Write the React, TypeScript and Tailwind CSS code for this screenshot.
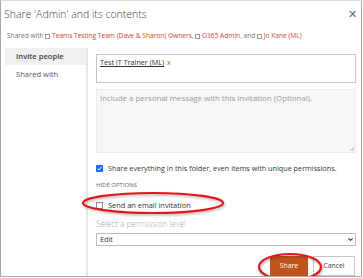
import { ChevronDown } from 'lucide-react';

const font = { fontFamily: '"Open Sans", "Noto Sans", sans-serif' };

export default function App() {
  return (
    <div className="w-[363px] h-[278px] bg-white" style={font}>
      <div className="relative w-[362px] h-[277px] border border-[#a9a9a9] border-t-[#dcdcdc] bg-white overflow-hidden">
        {/* Header */}
        <div className="flex items-start justify-between pl-[3px] pr-[4px] pt-[5px] h-[21px]">
          <h1 className="text-[10.5px] font-light text-[#444] leading-[16px]">
            Share 'Admin' and its contents
          </h1>
          <span className="text-[11px] leading-[10px] text-[#666] mt-[3px]">✕</span>
        </div>

        <p className="mt-[9px] pl-[6px] text-[6.6px] leading-[9px] text-[#777] whitespace-nowrap">
          Shared with <span className="inline-block w-[5px] h-[5px] border border-[#999] align-[-0.5px]" />{' '}
          <span className="text-[#c8472a]">Teams Testing Team (Dave &amp; Sharon) Owners</span>,{' '}
          <span className="inline-block w-[5px] h-[5px] border border-[#999] align-[-0.5px]" />{' '}
          <span className="text-[#c8472a]">O365 Admin</span>, and{' '}
          <span className="inline-block w-[5px] h-[5px] border border-[#999] align-[-0.5px]" />{' '}
          <span className="text-[#c8472a]">Jo Kane (ML)</span>
        </p>

        {/* Body */}
        <div className="flex mt-[8px] h-[240px]">
          <nav className="w-[81px] ml-[4px]">
            <div className="h-[17px] bg-[#f0f0f0] pl-[11px] text-[7.6px] font-semibold text-[#444] leading-[17px]">
              Invite people
            </div>
            <div className="mt-[1px] h-[17px] pl-[11px] text-[7.6px] text-[#555] leading-[17px]">Shared with</div>
          </nav>
          <div className="w-[2px] bg-[#e6e6e6]" />

          <div className="flex-1 pl-[8px] pr-[5px] pt-[6px]">
            <div className="h-[29px] border border-[#c6c6c6] px-[3px] pt-[2px] text-[7.2px] leading-[11px]">
              <span className="text-[#333] underline">Test IT Trainer (ML)</span>
              <span className="text-[#d0572e] ml-[3px]">x</span>
            </div>

            <div className="relative mt-[6px] h-[64px] border border-[#ececec] bg-[#f8f7f6] px-[3px] pt-[3px] text-[7.9px] text-[#9a9a9a] leading-[11px]">
              Include a personal message with this invitation (Optional).
              <svg className="absolute right-[1px] bottom-[1px]" width="5" height="5" viewBox="0 0 5 5">
                <path d="M1 5L5 1M3 5L5 3" stroke="#999" strokeWidth="0.7" />
              </svg>
            </div>

            <label className="mt-[10px] flex items-center gap-[5px] text-[7.25px] text-[#333] leading-[10px] whitespace-nowrap">
              <span className="w-[7px] h-[7px] rounded-[1px] bg-[#1e6fdc] flex items-center justify-center">
                <svg width="5" height="5" viewBox="0 0 10 10">
                  <path d="M1.5 5.5L4 8L8.5 2" stroke="white" strokeWidth="2" fill="none" />
                </svg>
              </span>
              Share everything in this folder, even items with unique permissions.
            </label>

            <p className="mt-[9px] text-[6px] text-[#666] leading-[6px]">HIDE OPTIONS</p>

            <label className="mt-[12px] flex items-center gap-[5px] text-[7.4px] text-[#333] leading-[11px] whitespace-nowrap">
              <span className="w-[7px] h-[7px] border border-[#888] bg-white" />
              Send an email invitation
            </label>

            <p className="mt-[7px] text-[8.2px] text-[#aaa] font-light leading-[11px]">Select a permission level</p>

            <div className="mt-[4px] h-[13px] border border-[#bdbdbd] flex items-center justify-between pl-[3px] pr-[1px] text-[7.2px] text-[#333]">
              Edit
              <ChevronDown size={7} strokeWidth={3.5} className="text-[#333]" />
            </div>

            <div className="mt-[10px] flex justify-end gap-[5px] pr-[1px]">
              <button className="w-[38px] h-[20px] bg-[#c1531c] text-white text-[6.8px]">Share</button>
              <button className="w-[42px] h-[20px] bg-white border border-[#c6c6c6] text-[#444] text-[6.8px]">Cancel</button>
            </div>
          </div>
        </div>

        {/* red highlight ellipses drawn over the dialog */}
        <svg className="absolute left-0 top-0 pointer-events-none" width="362" height="277">
          <defs>
            <filter id="sh" x="-10%" y="-30%" width="120%" height="160%">
              <feDropShadow dx="1" dy="1.5" stdDeviation="1" floodColor="#000" floodOpacity="0.3" />
            </filter>
          </defs>
          <ellipse cx="152" cy="202" rx="70" ry="10" fill="none" stroke="#e3141b" strokeWidth="2.2" filter="url(#sh)" />
          <ellipse cx="289" cy="266" rx="31" ry="13" fill="none" stroke="#e3141b" strokeWidth="2.2" filter="url(#sh)" />
        </svg>
      </div>
    </div>
  );
}
